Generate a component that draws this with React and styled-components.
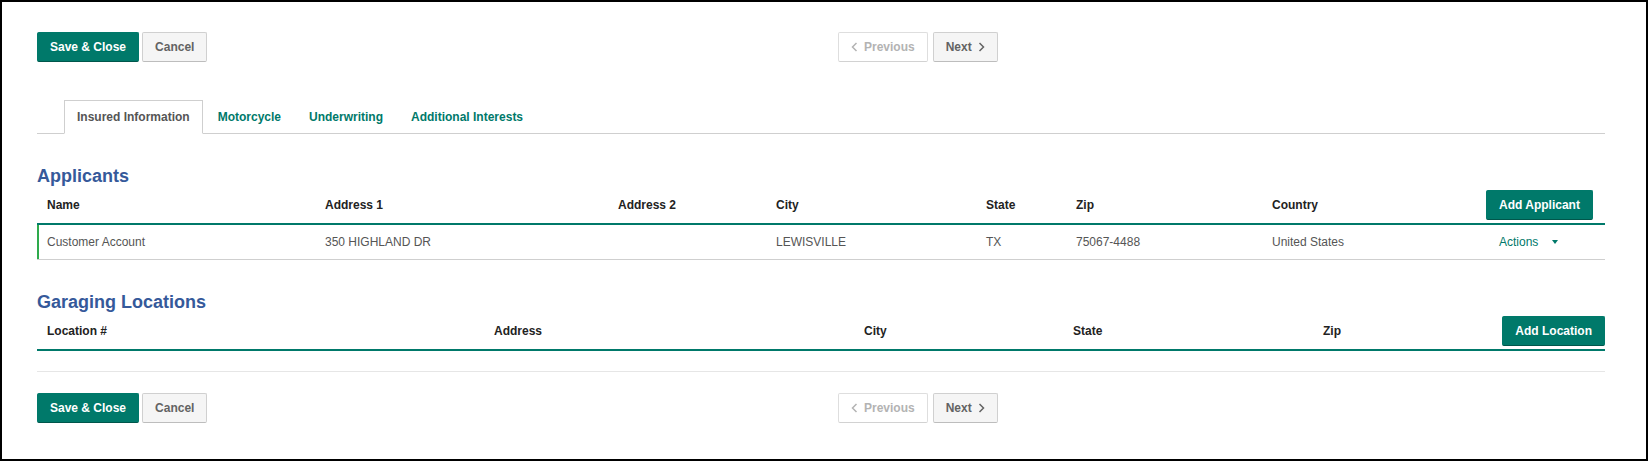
import React from "react";
import styled, { createGlobalStyle, css } from "styled-components";

const TEAL = "#00796a";
const BLUE = "#35599a";

const GlobalStyle = createGlobalStyle`
  html, body { margin: 0; padding: 0; background: #fff; }
  body { font-family: "Liberation Sans", Arial, sans-serif; }
  * { box-sizing: border-box; }
`;

const Frame = styled.div`
  width: 1648px;
  height: 461px;
  border: 2px solid #000;
  padding: 30px 41px 0 35px;
  background: #fff;
  font-family: "Liberation Sans", Arial, sans-serif;
`;

const ActionBar = styled.div`
  display: grid;
  grid-template-columns: 801px auto 1fr;
  align-items: center;
  margin-top: ${(p) => p.$mt || 0}px;
`;

const ButtonGroup = styled.div`
  display: flex;
  gap: ${(p) => p.$gap || 3}px;
`;

const variants = {
  primary: css`
    background: ${TEAL};
    border-color: ${TEAL};
    border-bottom-color: #00564b;
    color: #fff;
  `,
  default: css`
    background: #f5f5f5;
    border-color: #d0d0d0;
    border-bottom-color: #bdbdbd;
    color: #636363;
  `,
  disabled: css`
    background: #fff;
    border-color: #dedede;
    border-bottom-color: #d2d2d2;
    color: #b3b3b3;
  `,
};

const Button = styled.button`
  height: 30px;
  padding: 0 12px;
  border: 1px solid;
  border-radius: 2px;
  font-family: "Liberation Sans", Arial, sans-serif;
  font-size: 12px;
  font-weight: bold;
  display: inline-flex;
  align-items: center;
  gap: 6px;
  cursor: pointer;
  white-space: nowrap;
  ${(p) => variants[p.$variant || "default"]}
`;

const Chevron = ({ dir }) => (
  <svg width="7" height="10" viewBox="0 0 7 10" aria-hidden="true">
    <path
      d={dir === "left" ? "M5.5 1 L1.5 5 L5.5 9" : "M1.5 1 L5.5 5 L1.5 9"}
      fill="none"
      stroke="currentColor"
      strokeWidth="1.5"
    />
  </svg>
);

const TabList = styled.nav`
  display: flex;
  margin-top: 38px;
  padding-left: 27px;
  border-bottom: 1px solid #cfcfcf;
`;

const Tab = styled.div`
  height: 34px;
  margin-bottom: -1px;
  margin-right: 2px;
  padding: 0 12px;
  display: flex;
  align-items: center;
  border: 1px solid transparent;
  font-size: 12px;
  font-weight: bold;
  color: ${TEAL};
  ${(p) =>
    p.$active &&
    css`
      background: #fff;
      border-color: #cfcfcf;
      border-bottom-color: #fff;
      color: #555;
    `}
`;

const SectionTitle = styled.h2`
  margin: ${(p) => p.$mt}px 0 0;
  font-size: 18px;
  line-height: 21px;
  font-weight: bold;
  color: ${BLUE};
`;

const HeadRow = styled.div`
  display: grid;
  grid-template-columns: ${(p) => p.$cols};
  align-items: center;
  height: 38px;
  border-bottom: 2px solid ${TEAL};
`;

const HeadCell = styled.div`
  display: flex;
  align-items: center;
  padding: 0 ${(p) => (p.$pr != null ? p.$pr : 10)}px 0 10px;
  font-size: 12px;
  font-weight: bold;
  color: #222;
`;

const HeadLabel = styled.span`
  flex: 1;
`;

const DataRow = styled.div`
  display: grid;
  grid-template-columns: ${(p) => p.$cols};
  align-items: center;
  height: 35px;
  border-bottom: 1px solid #cfcfcf;
  box-shadow: inset 2px 0 0 #2eaa4c;
`;

const Cell = styled.div`
  padding: 0 10px;
  font-size: 12px;
  color: #555;
  white-space: nowrap;
`;

const ActionsLink = styled.a`
  display: inline-flex;
  align-items: center;
  gap: 14px;
  padding-left: 13px;
  font-size: 12px;
  color: ${TEAL};
  text-decoration: none;
`;

const Caret = () => (
  <svg width="6" height="4" viewBox="0 0 6 4" aria-hidden="true">
    <path d="M0 0 H6 L3 4 Z" fill={TEAL} />
  </svg>
);

const Divider = styled.hr`
  margin: 20px 0 0;
  border: 0;
  border-top: 1px solid #e6e6e6;
  height: 0;
`;

const APP_COLS = "278px 293px 158px 210px 90px 196px 214px 1fr";
const LOC_COLS = "447px 370px 209px 250px 1fr";

const Actions = ({ mt }) => (
  <ActionBar $mt={mt}>
    <ButtonGroup>
      <Button $variant="primary">Save &amp; Close</Button>
      <Button>Cancel</Button>
    </ButtonGroup>
    <ButtonGroup $gap={5}>
      <Button $variant="disabled">
        <Chevron dir="left" />
        Previous
      </Button>
      <Button>
        Next
        <Chevron dir="right" />
      </Button>
    </ButtonGroup>
    <div />
  </ActionBar>
);

const applicantHeads = ["Name", "Address 1", "Address 2", "City", "State", "Zip", "Country"];
const applicant = ["Customer Account", "350 HIGHLAND DR", "", "LEWISVILLE", "TX", "75067-4488", "United States"];

export default function App() {
  return (
    <>
      <GlobalStyle />
      <Frame>
        <Actions mt={0} />

        <TabList>
          <Tab $active>Insured Information</Tab>
          <Tab>Motorcycle</Tab>
          <Tab>Underwriting</Tab>
          <Tab>Additional Interests</Tab>
        </TabList>

        <SectionTitle $mt={32}>Applicants</SectionTitle>
        <HeadRow $cols={APP_COLS}>
          {applicantHeads.map((h) => (
            <HeadCell key={h}>{h}</HeadCell>
          ))}
          <HeadCell $pr={12}>
            <Button $variant="primary">Add Applicant</Button>
          </HeadCell>
        </HeadRow>
        <DataRow $cols={APP_COLS}>
          {applicant.map((v, i) => (
            <Cell key={i}>{v}</Cell>
          ))}
          <Cell>
            <ActionsLink href="#">
              Actions
              <Caret />
            </ActionsLink>
          </Cell>
        </DataRow>

        <SectionTitle $mt={32}>Garaging Locations</SectionTitle>
        <HeadRow $cols={LOC_COLS}>
          <HeadCell>Location #</HeadCell>
          <HeadCell>Address</HeadCell>
          <HeadCell>City</HeadCell>
          <HeadCell>State</HeadCell>
          <HeadCell $pr={0}>
            <HeadLabel>Zip</HeadLabel>
            <Button $variant="primary">Add Location</Button>
          </HeadCell>
        </HeadRow>

        <Divider />
        <Actions mt={21} />
      </Frame>
    </>
  );
}
